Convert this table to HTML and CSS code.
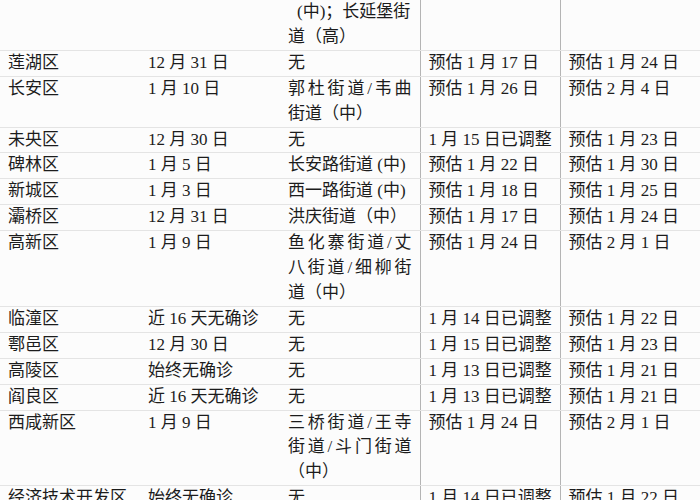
FILE: index.html
```html
<!DOCTYPE html>
<html lang="zh-CN">
<head>
<meta charset="utf-8">
<title>西安各区调整表</title>
<link rel="stylesheet" href="styles.css">
</head>
<body>
<table class="sheet">
  <colgroup>
    <col class="c1"><col class="c2"><col class="c3"><col class="c4"><col class="c5">
  </colgroup>
  <tbody>
    <tr>
      <td></td><td></td>
      <td><span class="ln indent">(中)；长延堡街</span><span class="ln">道（高）</span></td>
      <td class="vl"></td><td class="vl"></td>
    </tr>
    <tr><td>莲湖区</td><td>12 月 31 日</td><td>无</td><td class="vl">预估 1 月 17 日</td><td class="vl">预估 1 月 24 日</td></tr>
    <tr><td>长安区</td><td>1 月 10 日</td><td><span class="ln just">郭杜街道/韦曲</span><span class="ln">街道（中）</span></td><td class="vl">预估 1 月 26 日</td><td class="vl">预估 2 月 4 日</td></tr>
    <tr><td>未央区</td><td>12 月 30 日</td><td>无</td><td class="vl">1 月 15 日已调整</td><td class="vl">预估 1 月 23 日</td></tr>
    <tr><td>碑林区</td><td>1 月 5 日</td><td>长安路街道 (中)</td><td class="vl">预估 1 月 22 日</td><td class="vl">预估 1 月 30 日</td></tr>
    <tr><td>新城区</td><td>1 月 3 日</td><td>西一路街道 (中)</td><td class="vl">预估 1 月 18 日</td><td class="vl">预估 1 月 25 日</td></tr>
    <tr><td>灞桥区</td><td>12 月 31 日</td><td>洪庆街道（中）</td><td class="vl">预估 1 月 17 日</td><td class="vl">预估 1 月 24 日</td></tr>
    <tr><td>高新区</td><td>1 月 9 日</td><td><span class="ln just">鱼化寨街道/丈</span><span class="ln just">八街道/细柳街</span><span class="ln">道（中）</span></td><td class="vl">预估 1 月 24 日</td><td class="vl">预估 2 月 1 日</td></tr>
    <tr><td>临潼区</td><td>近 16 天无确诊</td><td>无</td><td class="vl">1 月 14 日已调整</td><td class="vl">预估 1 月 22 日</td></tr>
    <tr><td>鄠邑区</td><td>12 月 30 日</td><td>无</td><td class="vl">1 月 15 日已调整</td><td class="vl">预估 1 月 23 日</td></tr>
    <tr><td>高陵区</td><td>始终无确诊</td><td>无</td><td class="vl">1 月 13 日已调整</td><td class="vl">预估 1 月 21 日</td></tr>
    <tr><td>阎良区</td><td>近 16 天无确诊</td><td>无</td><td class="vl">1 月 13 日已调整</td><td class="vl">预估 1 月 21 日</td></tr>
    <tr><td>西咸新区</td><td>1 月 9 日</td><td><span class="ln just">三桥街道/王寺</span><span class="ln just">街道/斗门街道</span><span class="ln">（中）</span></td><td class="vl">预估 1 月 24 日</td><td class="vl">预估 2 月 1 日</td></tr>
    <tr><td>经济技术开发区</td><td>始终无确诊</td><td>无</td><td class="vl">1 月 14 日已调整</td><td class="vl">预估 1 月 22 日</td></tr>
  </tbody>
</table>
</body>
</html>
```
FILE: styles.css
```css
html, body {
  margin: 0;
  padding: 0;
  background: #fcfcfc;
}

.sheet {
  width: 700px;
  table-layout: fixed;
  border-collapse: collapse;
  font-family: "Liberation Serif", "Noto Sans CJK SC", serif;
  font-size: 17px;
  line-height: 24.9px;
  color: #1c1c1c;
}

.sheet col {
  width: 140px;
}

.sheet td {
  padding: 0 8px;
  vertical-align: top;
  border-bottom: 1px solid #e4e4e4;
  white-space: nowrap;
}

.sheet td.vl {
  border-left: 1px solid #b4b4b4;
}

.ln {
  display: block;
}

.just {
  text-align: justify;
  text-align-last: justify;
}

.indent {
  padding-left: 9px;
}
```
